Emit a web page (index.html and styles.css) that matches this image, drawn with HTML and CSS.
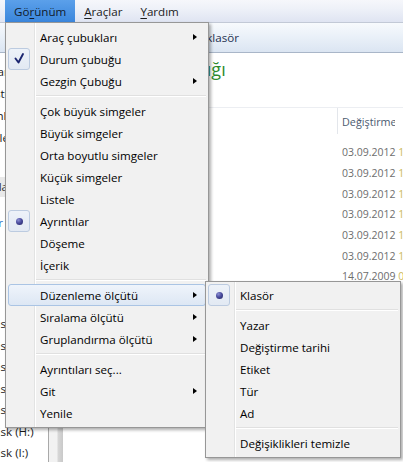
FILE: index.html
```html
<!DOCTYPE html>
<html lang="tr">
<head>
<meta charset="utf-8">
<title>Görünüm menüsü</title>
<link rel="stylesheet" href="styles.css">
</head>
<body>
<div class="window">
  <div class="menubar">
    <div class="mb-item active">Gö<u>r</u>ünüm</div>
    <div class="mb-item"><u>A</u>raçlar</div>
    <div class="mb-item"><u>Y</u>ardım</div>
  </div>
  <div class="toolbar">
    <div class="tb-group">
      <span class="tb-btn">Düzenle ▾</span>
      <span class="tb-btn">Paylaş ▾</span>
      <span class="tb-btn">Yeni klasör</span>
    </div>
  </div>
  <div class="main">
    <div class="nav">
      <div class="nav-list">
        <div class="nav-row">Sık Kullanılanlar</div>
        <div class="nav-row">Masaüstünde</div>
        <div class="nav-row">İndirilenler</div>
        <div class="nav-row">Son yerler</div>
        <div class="nav-row nav-band">Kitaplıklar</div>
        <div class="nav-row nav-link">Belgeler</div>
      </div>
      <div class="nav-list drives">
        <div class="nav-row">Yerel Disk (C:)</div>
        <div class="nav-row">Yerel Disk (D:)</div>
        <div class="nav-row">Yerel Disk (E:)</div>
        <div class="nav-row">Yerel Disk (F:)</div>
        <div class="nav-row">Yerel Disk (G:)</div>
        <div class="nav-row">Yerel Disk (H:)</div>
        <div class="nav-row">Yerel Disk (I:)</div>
      </div>
    </div>
    <div class="nav-split"></div>
    <div class="content">
      <div class="title">Belgeler kitaplığı</div>
      <div class="list-head">
        <div class="cell">Ad</div>
        <div class="cell col-date">Değiştirme tarihi</div>
      </div>
      <div class="row"><div class="cell">Belgelerim</div><div class="cell col-date">03.09.2012 <span class="time">13:41</span></div></div>
      <div class="row"><div class="cell">Fax</div><div class="cell col-date">03.09.2012 <span class="time">13:41</span></div></div>
      <div class="row"><div class="cell">My Data Sources</div><div class="cell col-date">03.09.2012 <span class="time">13:41</span></div></div>
      <div class="row"><div class="cell">Projeler</div><div class="cell col-date">03.09.2012 <span class="time">13:41</span></div></div>
      <div class="row"><div class="cell">Raporlar</div><div class="cell col-date">03.09.2012 <span class="time">13:41</span></div></div>
      <div class="row"><div class="cell">Taranan Belgeler</div><div class="cell col-date">03.09.2012 <span class="time">13:41</span></div></div>
      <div class="row"><div class="cell">desktop.ini</div><div class="cell col-date">14.07.2009 <span class="time">07:54</span></div></div>
    </div>
  </div>
</div>

<div class="menu main-menu">
  <div class="item"><span class="icon"></span><span class="label">Araç çubukları</span><span class="arrow"></span></div>
  <div class="item"><span class="icon boxed"><svg width="20" height="20" viewBox="0 0 20 20"><path d="M6.5 9.5 L9.5 13.5 L14 5" fill="none" stroke="#1c2670" stroke-width="1.9" stroke-linecap="round" stroke-linejoin="round"/></svg></span><span class="label">Durum çubuğu</span></div>
  <div class="item"><span class="icon"></span><span class="label">Gezgin Çubuğu</span><span class="arrow"></span></div>
  <div class="sep"></div>
  <div class="item"><span class="icon"></span><span class="label">Çok büyük simgeler</span></div>
  <div class="item"><span class="icon"></span><span class="label">Büyük simgeler</span></div>
  <div class="item"><span class="icon"></span><span class="label">Orta boyutlu simgeler</span></div>
  <div class="item"><span class="icon"></span><span class="label">Küçük simgeler</span></div>
  <div class="item"><span class="icon"></span><span class="label">Listele</span></div>
  <div class="item"><span class="icon boxed"><span class="dot"></span></span><span class="label">Ayrıntılar</span></div>
  <div class="item"><span class="icon"></span><span class="label">Döşeme</span></div>
  <div class="item"><span class="icon"></span><span class="label">İçerik</span></div>
  <div class="sep"></div>
  <div class="item hot"><span class="icon"></span><span class="label">Düzenleme ölçütü</span><span class="arrow"></span></div>
  <div class="item"><span class="icon"></span><span class="label">Sıralama ölçütü</span><span class="arrow"></span></div>
  <div class="item"><span class="icon"></span><span class="label">Gruplandırma ölçütü</span><span class="arrow"></span></div>
  <div class="sep"></div>
  <div class="item"><span class="icon"></span><span class="label">Ayrıntıları seç...</span></div>
  <div class="item"><span class="icon"></span><span class="label">Git</span><span class="arrow"></span></div>
  <div class="item"><span class="icon"></span><span class="label">Yenile</span></div>
</div>

<div class="menu sub-menu">
  <div class="item"><span class="icon boxed"><span class="dot"></span></span><span class="label">Klasör</span></div>
  <div class="sep"></div>
  <div class="item"><span class="icon"></span><span class="label">Yazar</span></div>
  <div class="item"><span class="icon"></span><span class="label">Değiştirme tarihi</span></div>
  <div class="item"><span class="icon"></span><span class="label">Etiket</span></div>
  <div class="item"><span class="icon"></span><span class="label">Tür</span></div>
  <div class="item"><span class="icon"></span><span class="label">Ad</span></div>
  <div class="sep"></div>
  <div class="item"><span class="icon"></span><span class="label">Değişiklikleri temizle</span></div>
</div>
</body>
</html>
```

FILE: styles.css
```css
* { box-sizing: border-box; }

html, body {
  margin: 0;
  padding: 0;
}

body {
  width: 403px;
  height: 462px;
  overflow: hidden;
  position: relative;
  background: #fff;
  font-family: "Open Sans", "Noto Sans", sans-serif;
  font-size: 11.6px;
  color: #000;
}

.window {
  display: flex;
  flex-direction: column;
  height: 462px;
}

/* menu bar */
.menubar {
  height: 22px;
  display: flex;
  padding-left: 5px;
  background: linear-gradient(#f6f7fb 0%, #eef1f8 40%, #dfe4f2 100%);
}

.mb-item {
  display: flex;
  align-items: center;
  padding: 0 9px;
  color: #1b1b1b;
}

.mb-item u { text-decoration-thickness: 1px; text-underline-offset: 2px; }

.mb-item.active {
  background: linear-gradient(#5ba0ea, #3a86dc);
  color: #111a2c;
}

/* command bar */
.toolbar {
  height: 31px;
  border-top: 1px solid #c2c9d6;
  border-bottom: 1px solid #a9b6c8;
  background: linear-gradient(#f7fafd, #e9f0f8 50%, #dbe5f2);
  display: flex;
  align-items: center;
}

.tb-group {
  width: 239px;
  padding-left: 12px;
  display: flex;
  justify-content: space-between;
  color: #1e3150;
}

/* main area */
.main {
  flex: 1;
  display: flex;
  min-height: 0;
}

.nav {
  width: 48px;
  overflow: hidden;
  background: #fff;
  display: flex;
  flex-direction: column;
  padding-top: 8px;
}

.nav-list {
  margin-left: -41px;
  white-space: nowrap;
  color: #1a1a1a;
}

.nav-row {
  height: 22px;
  line-height: 22px;
}

.nav-band {
  margin-top: 28px;
  height: 20px;
  line-height: 20px;
  background: #e9e9e9;
  color: #333;
}

.nav-link {
  margin-top: 15px;
  color: #2a6cc4;
}

.drives {
  margin-top: 79px;
}

.drives .nav-row {
  height: 21.5px;
  line-height: 21.5px;
}

.nav-split {
  width: 15px;
  border-left: 1px solid #a9a9a9;
  background: linear-gradient(to right, #f2f2f2 0, #f2f2f2 8px, #d7d7d7 9px, #c9c9c9 14px);
}

.content {
  flex: 1;
  background: #fff;
  padding-top: 4px;
  overflow: hidden;
}

.title {
  height: 24px;
  line-height: 24px;
  padding-left: 25px;
  font-size: 18px;
  color: #2e8b2e;
  white-space: nowrap;
}

.list-head {
  margin-top: 26px;
  height: 27px;
  border-top: 1px solid #eceef2;
  display: grid;
  grid-template-columns: 274px 58px 1fr;
  align-items: stretch;
  color: #4c5b70;
  font-size: 10.8px;
  white-space: nowrap;
}

.list-head .cell {
  display: flex;
  align-items: center;
  padding-left: 5px;
  overflow: hidden;
}

.list-head .col-date {
  border-left: 1px solid #e3e6eb;
  padding-left: 4px;
}

.list-head + .row { margin-top: 8px; }

.row {
  display: grid;
  grid-template-columns: 274px 1fr;
  height: 20.7px;
  align-items: center;
  color: #6d6d6d;
  font-size: 10.5px;
  white-space: nowrap;
}

.row .cell { padding-left: 5px; overflow: hidden; }

.time { color: #cdb95c; }

/* popup menus */
.menu {
  position: absolute;
  border: 1px solid #979797;
  background:
    linear-gradient(to right, transparent 28px, #e2e3e3 28px, #e2e3e3 29px, #ffffff 29px, #ffffff 30px, transparent 30px),
    #f1f1f1;
  box-shadow: 2px 2px 3px rgba(0, 0, 0, 0.32);
  color: #000;
}

.main-menu {
  left: 5px;
  top: 22px;
  width: 204px;
  padding: 3px 2px 3px 2px;
}

.sub-menu {
  left: 205px;
  top: 281px;
  width: 196px;
  padding: 2px 2px 3px 2px;
}

.item {
  height: 22px;
  display: flex;
  align-items: center;
  border: 1px solid transparent;
  border-radius: 3px;
  white-space: nowrap;
}

.item.hot {
  border-color: #aac4e4;
  background: linear-gradient(#eff4fb, #dde7f4);
}

.icon {
  width: 22px;
  height: 22px;
  margin: -1px 0 -1px -1px;
  flex: none;
  display: flex;
  align-items: center;
  justify-content: center;
}

.icon.boxed {
  border: 1px solid #bccbe0;
  border-radius: 3px;
  background: linear-gradient(#edf2f9, #e2e9f3);
}

.icon svg { display: block; }

.dot {
  width: 7px;
  height: 7px;
  border-radius: 50%;
  background: radial-gradient(circle at 35% 30%, #8c90d4 0, #4a4c9e 45%, #20215e 100%);
}

.label {
  flex: 1;
  padding-left: 10px;
}

.arrow {
  width: 0;
  height: 0;
  border-top: 3.5px solid transparent;
  border-bottom: 3.5px solid transparent;
  border-left: 4px solid #000;
  margin-right: 8px;
}

.sep {
  height: 8px;
  margin-left: 28px;
  background: linear-gradient(transparent 3px, #e0e0e0 3px, #e0e0e0 4px, #ffffff 4px, #ffffff 5px, transparent 5px);
}
```
